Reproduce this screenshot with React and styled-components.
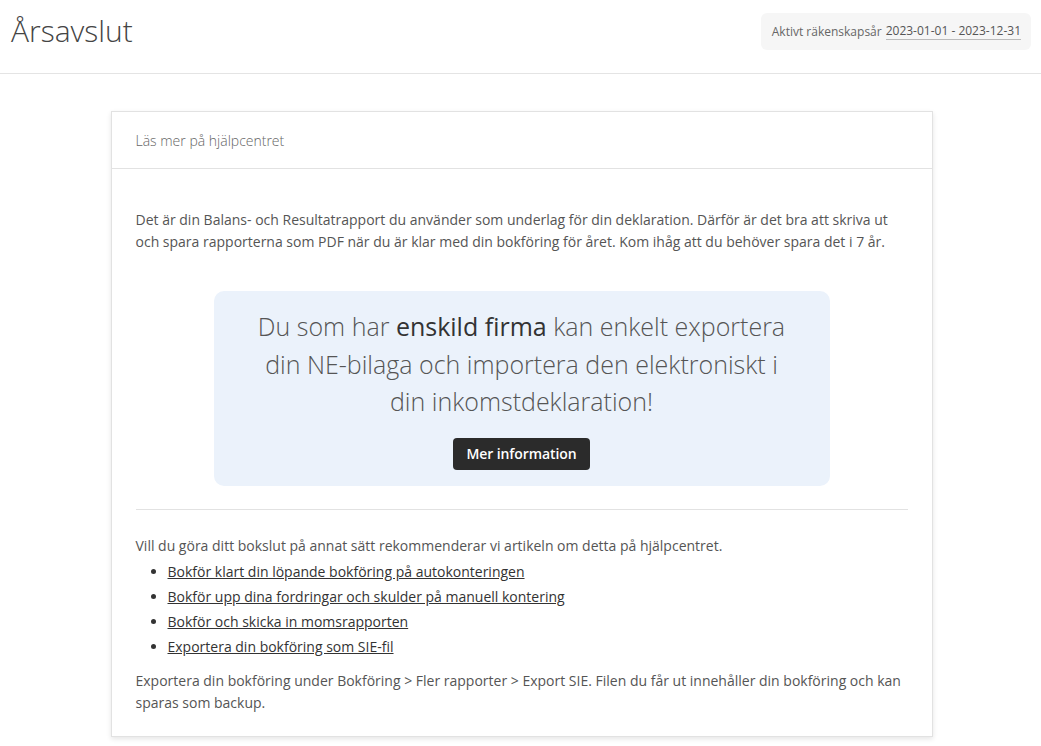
import React from "react";
import styled, { createGlobalStyle } from "styled-components";

const GlobalStyle = createGlobalStyle`
  body {
    margin: 0;
    background: #fff;
    font-family: "Open Sans", "Liberation Sans", sans-serif;
    color: #555;
  }
`;

const Header = styled.header`
  display: flex;
  justify-content: space-between;
  align-items: flex-start;
  height: 73px;
  padding: 0 10px 0 11px;
  border-bottom: 1px solid #e4e4e4;
`;

const Title = styled.h1`
  margin: 11px 0 0;
  font-size: 30px;
  font-weight: 300;
  color: #444;
  line-height: 40px;
`;

const YearBadge = styled.div`
  margin-top: 13px;
  padding: 0 10px 0 11px;
  height: 37px;
  display: flex;
  align-items: center;
  gap: 4px;
  background: #f6f6f6;
  border-radius: 6px;
  font-size: 12px;
  color: #666;
`;

const YearLink = styled.span`
  border-bottom: 1px solid #bbb;
  line-height: 16px;
  color: #555;
`;

const Main = styled.main`
  display: flex;
  justify-content: center;
  padding: 37px 0 20px 2px;
`;

const Card = styled.section`
  width: 820px;
  border: 1px solid #e2e2e2;
  box-shadow: 0 2px 5px rgba(0, 0, 0, 0.1);
  background: #fff;
`;

const CardHeader = styled.div`
  padding: 0 24px;
  height: 56px;
  display: flex;
  align-items: center;
  border-bottom: 1px solid #e2e2e2;
  font-size: 14px;
  font-weight: 300;
  color: #666;
`;

const CardBody = styled.div`
  padding: 40px 24px 22px;
`;

const Text = styled.p`
  margin: 0;
  font-size: 14px;
  line-height: 22px;
  color: #555;
`;

const Promo = styled.div`
  margin: 38px auto 0;
  width: 616px;
  box-sizing: border-box;
  padding: 17px 30px 16.5px;
  background: #ebf2fb;
  border-radius: 10px;
  text-align: center;
`;

const PromoText = styled.p`
  margin: 0;
  font-size: 25px;
  font-weight: 300;
  line-height: 37.5px;
  color: #555;
  padding: 0 12px;

  strong {
    font-weight: 400;
    color: #333;
  }
`;

const Button = styled.button`
  margin-top: 17px;
  height: 32px;
  padding: 0 14px;
  border: none;
  border-radius: 4px;
  background: #2b2b2b;
  color: #fff;
  font-family: "Open Sans", "Liberation Sans", sans-serif;
  font-size: 14px;
  font-weight: 600;
  letter-spacing: -0.1px;
`;

const Divider = styled.hr`
  margin: 23px 0 25px;
  border: none;
  border-top: 1px solid #e2e2e2;
`;

const LinkList = styled.ul`
  margin: 1.5px 0 0;
  padding-left: 32px;
  list-style: disc;
`;

const LinkItem = styled.li`
  font-size: 14px;
  line-height: 25px;
  color: #333;

  a {
    color: #333;
    text-decoration: underline;
  }
`;

const Footnote = styled(Text)`
  margin-top: 11.5px;
`;

const links = [
  "Bokför klart din löpande bokföring på autokonteringen",
  "Bokför upp dina fordringar och skulder på manuell kontering",
  "Bokför och skicka in momsrapporten",
  "Exportera din bokföring som SIE-fil",
];

export default function App() {
  return (
    <>
      <GlobalStyle />
      <Header>
        <Title>Årsavslut</Title>
        <YearBadge>
          Aktivt räkenskapsår <YearLink>2023-01-01 - 2023-12-31</YearLink>
        </YearBadge>
      </Header>
      <Main>
        <Card>
          <CardHeader>Läs mer på hjälpcentret</CardHeader>
          <CardBody>
            <Text>
              Det är din Balans- och Resultatrapport du använder som underlag för din deklaration.
              Därför är det bra att skriva ut och spara rapporterna som PDF när du är klar med din
              bokföring för året. Kom ihåg att du behöver spara det i 7 år.
            </Text>
            <Promo>
              <PromoText>
                Du som har <strong>enskild firma</strong> kan enkelt exportera din NE-bilaga och
                importera den elektroniskt i din inkomstdeklaration!
              </PromoText>
              <Button>Mer information</Button>
            </Promo>
            <Divider />
            <Text>
              Vill du göra ditt bokslut på annat sätt rekommenderar vi artikeln om detta på
              hjälpcentret.
            </Text>
            <LinkList>
              {links.map((l) => (
                <LinkItem key={l}>
                  <a href="#">{l}</a>
                </LinkItem>
              ))}
            </LinkList>
            <Footnote>
              Exportera din bokföring under Bokföring &gt; Fler rapporter &gt; Export SIE. Filen du
              får ut innehåller din bokföring och kan sparas som backup.
            </Footnote>
          </CardBody>
        </Card>
      </Main>
    </>
  );
}
